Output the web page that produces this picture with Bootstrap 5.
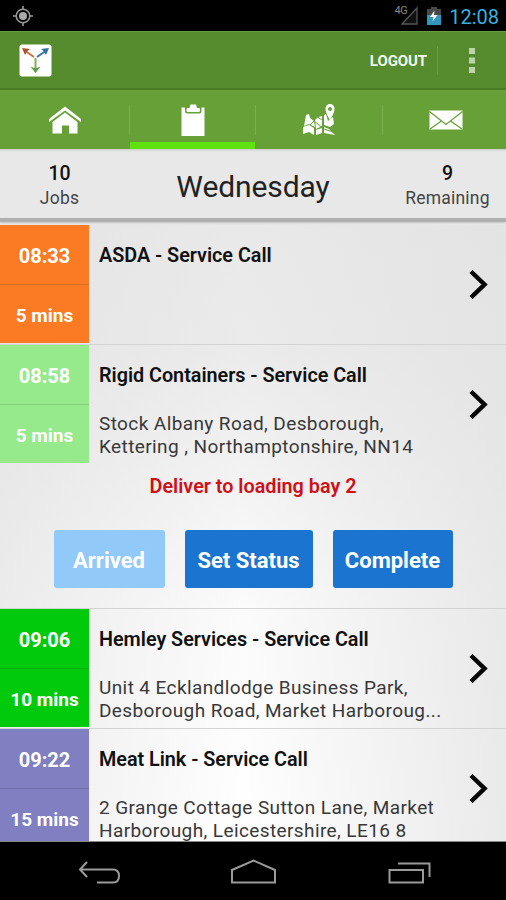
<!DOCTYPE html>
<html lang="en">
<head>
<meta charset="utf-8">
<meta name="viewport" content="width=device-width, initial-scale=1">
<title>Jobs - Wednesday</title>
<link href="https://cdn.jsdelivr.net/npm/bootstrap@5.3.0/dist/css/bootstrap.min.css" rel="stylesheet">
<style>
body{font-family:Roboto,"Liberation Sans",sans-serif;background:#000;width:506px;height:900px;overflow:hidden;color:#111}
svg{display:block;flex:none}
.status{height:31px;color:#38b0df;font-size:20px;line-height:33px;padding:0 7px 0 12px}
.clock{padding-top:3px}
.net{font-size:11px;line-height:10px;color:#888;margin-top:-10px;margin-right:-6px;letter-spacing:-.5px}
.appbar{height:59px;background:#568c2e;border-top:1px solid #6a9c3f;border-bottom:2px solid #497c25;padding-left:19px}
.logout{font-size:15px;font-weight:700;letter-spacing:-.1px;color:#f1f6ec;padding-right:10px;border-right:1px solid #6e9c4b;height:29px;line-height:31px}
.tabs{height:59px;background:#67a036}
.tab-item{position:relative;width:126.5px;height:59px;padding:13px 0 0 4px}
.tab-item+.tab-item{padding-left:6px}
.tab-item+.tab-item::before{content:"";position:absolute;left:2px;top:15px;height:30px;border-left:1px solid #7bb04f}
.tab-item.current::after{content:"";position:absolute;left:3px;right:-2px;bottom:0;height:7px;background:#60e211}
.dayhead{height:76px;background:#e8e8e8;padding-bottom:3px;position:relative}
.dayhead::before{content:"";position:absolute;left:0;right:0;top:0;height:3px;background:linear-gradient(#cfcfcf,#e8e8e8)}
.dayhead::after{content:"";position:absolute;left:0;right:0;bottom:3px;height:4px;background:#b0b0b0;box-shadow:0 1px 2px #c4c4c4}
.count{width:119px;line-height:25px;font-size:17.5px}
.count b{font-weight:500;font-size:19.5px}
.count span{color:#444;letter-spacing:.2px}
.count:last-child{padding-left:2px}
.day{font-size:30px;font-weight:400;letter-spacing:-.1px;padding-top:1px;color:#222}
.joblist{height:617px;overflow:hidden;background:linear-gradient(90deg,rgba(225,225,225,.6) 0,rgba(245,245,245,0) 48%,rgba(225,225,225,.7) 100%),linear-gradient(#e9e9e9 0,#ebebeb 20%,#fbfbfb 62%,#fff 100%);border-bottom:1px solid #888}
.job{height:118.5px}
.job+.job,.extra+.job{border-top:1px solid #d3d3d3;height:119.5px}
.slot{width:89px;height:118px;color:#fff;font-size:20px;font-weight:700;background:var(--slot);flex:none}
.slot div{height:59px;line-height:62px;text-align:center}
.slot div+div{border-top:1px solid rgba(0,0,0,.12);font-size:19px;line-height:61px}
.orange{--slot:#fa7b24}.pale{--slot:#96ea8b}.green{--slot:#00ca0b}.violet{--slot:#7f7fc2}
.info{width:360px;padding:19px 0 0 10px;flex:none}
.title{font-size:19.8px;font-weight:600;line-height:24px;height:48px;white-space:nowrap;letter-spacing:-.02px}
.addr{font-size:19px;line-height:23px;white-space:nowrap;color:#383838;letter-spacing:.4px}
.go{margin:44px 0 0 19.5px}
.extra{height:145px}
.note{color:#cf1016;font-size:19.8px;font-weight:600;line-height:24px;padding-top:12px}
.actions{gap:20px;padding:31px 0 0 0}
.actions .btn{height:58px;border:0;border-radius:3px;background:#1b75d0;font-size:22px;font-weight:700;padding:2px 0 0;opacity:1;color:#fff}
.w1{width:111px}.w2{width:128px}.w3{width:120px}
.actions .btn.off{background:#91c9f9}
.navbtns{height:58px;background:#000}
</style>
<script src="https://cdn.jsdelivr.net/npm/bootstrap@5.3.0/dist/js/bootstrap.bundle.min.js"></script>
</head>
<body>
<div class="status d-flex align-items-center">
<svg width="22" height="22" viewBox="0 0 22 22" fill="none" stroke="#999" stroke-width="1.6"><circle cx="11" cy="11" r="6.8"/><circle cx="11" cy="11" r="4" fill="#aaa" stroke="none"/><path d="M11 1v3.500M11 17.500V21M1 11h3.500M17.500 11H21"/></svg>
<span class="net ms-auto">4G</span>
<svg width="18" height="20" viewBox="0 0 18 20" fill="#111" stroke="#555" stroke-width="1.300"><path d="M16 2v16H1z"/></svg>
<svg class="ms-2" width="14" height="20" viewBox="0 0 14 20"><path d="M0 3h4V1h6v2h4v16H0z" fill="#484848"/><path d="M0 9h14v10H0z" fill="#3195bd"/><path d="M7.500 4.500L3 11h3.500l-1 4.500L10.500 9H7z" fill="#fff"/></svg>
<span class="clock ms-2">12:08</span>
</div>
<div class="appbar d-flex align-items-center">
<svg width="33" height="33" viewBox="0 0 33 33" fill="none" stroke-width="1.600"><rect x=".5" y=".5" width="32" height="32" rx="2.500" fill="#fff"/><path d="M15 13L7 7.500" stroke="#c8743c" stroke-width="2"/><path d="M3 4l8 1-3 2.500-2 3.500z" fill="#b0502c"/><path d="M18 13l8-5.500" stroke="#3476ad" stroke-width="2"/><path d="M30 4l-8 1 3 2.500 2 3.500z" fill="#2f6ea8"/><path d="M16.500 14v12" stroke="#7fae52" stroke-width="2"/><path d="M11.500 22.500l5 2 5-2-5 6.500z" fill="#5f9a45"/></svg>
<span class="logout ms-auto">LOGOUT</span>
<svg width="68" height="29" viewBox="0 0 68 29" fill="#bdd4ab"><path d="M31 2h6v6h-6zM31 11.500h6v6h-6zM31 21h6v6h-6z"/></svg>
</div>
<div class="tabs d-flex">
<div class="tab-item"><svg class="mx-auto" width="34" height="34" viewBox="0 0 34 34" fill="#fff"><path d="M1 16L17 3.500 33 16v3L17 7.500 1 19z"/><path d="M4.500 19L17 9.500 29.500 19v11.500H21v-8h-7v8H4.500z"/></svg></div>
<div class="tab-item current"><svg class="mx-auto" width="34" height="34" viewBox="0 0 34 34"><path d="M5.500 4.500h23V33h-23z" fill="#fff"/><path d="M9 4h16.500v4q0 2.500-2.500 2.500H11.500Q9 10.500 9 8z" fill="#67a036"/><path d="M10.500 8V6q0-1 1.500-1h1.500l1-3.500H20l1 3.500h1.500q1.500 0 1.500 1v2q0 1-1.500 1H12q-1.500 0-1.500-1z" fill="#fff"/></svg></div>
<div class="tab-item"><svg class="mx-auto" width="34" height="34" viewBox="0 0 34 34" fill="#fff"><path d="M4 12l3-1 1 4 4 3 1 6-6-3-5 2zM1 24l6-2 5 3v7l-5-3-6 2zM13 17l3-3 4-1 0 10-6 3zM14 27l6-2v5l-6 2zM22 12l2-1 2 7 5-4 1 7-4 3-6-2zM22 24l5 2 6 6-11-2z"/><path fill-rule="evenodd" d="M28 1a4.500 4.500 0 0 1 4.500 5c0 4-4.500 11-4.500 11s-4.500-7-4.500-11a4.500 4.500 0 0 1 4.500-5zm0 3a2 2 0 1 0 0 4 2 2 0 0 0 0-4z"/><path d="M12 14q2-2 5 1t4-1M8 22l4-4 10 8 9 3" fill="none" stroke="#67a036"/></svg></div>
<div class="tab-item"><svg class="mx-auto" width="34" height="34" viewBox="0 0 34 34"><path d="M.5 7.500h33v19H.5z" fill="#fff"/><path d="M.5 8.500l16.500 13 16.500-13M1 26l11.500-8M33 26l-11.500-8" fill="none" stroke="#67a036" stroke-width="1.300"/></svg></div>
</div>
<div class="dayhead d-flex justify-content-between align-items-center text-center">
<div class="count"><b class="d-block">10</b><span>Jobs</span></div>
<div class="day">Wednesday</div>
<div class="count"><b class="d-block">9</b><span>Remaining</span></div>
</div>
<main class="joblist">
<div class="job d-flex"><div class="slot orange"><div>08:33</div><div>5 mins</div></div><div class="info"><div class="title">ASDA - Service Call</div></div><svg class="go" width="20" height="30" viewBox="0 0 20 30" fill="none" stroke="#050505" stroke-width="4.500"><path d="M2 2.500L15.500 15.500 2 28.500"/></svg></div>
<div class="job d-flex"><div class="slot pale"><div>08:58</div><div>5 mins</div></div><div class="info"><div class="title">Rigid Containers - Service Call</div><div class="addr">Stock Albany Road, Desborough,<br>Kettering , Northamptonshire, NN14</div></div><svg class="go" width="20" height="30" viewBox="0 0 20 30" fill="none" stroke="#050505" stroke-width="4.500"><path d="M2 2.500L15.500 15.500 2 28.500"/></svg></div>
<div class="extra text-center"><div class="note">Deliver to loading bay 2</div><div class="actions d-flex justify-content-center"><button class="btn off w1" disabled>Arrived</button><button class="btn w2">Set Status</button><button class="btn w3">Complete</button></div></div>
<div class="job d-flex"><div class="slot green"><div>09:06</div><div>10 mins</div></div><div class="info"><div class="title">Hemley Services - Service Call</div><div class="addr">Unit 4 Ecklandlodge Business Park,<br>Desborough Road, Market Harboroug...</div></div><svg class="go" width="20" height="30" viewBox="0 0 20 30" fill="none" stroke="#050505" stroke-width="4.500"><path d="M2 2.500L15.500 15.500 2 28.500"/></svg></div>
<div class="job d-flex"><div class="slot violet"><div>09:22</div><div>15 mins</div></div><div class="info"><div class="title">Meat Link - Service Call</div><div class="addr">2 Grange Cottage Sutton Lane, Market<br>Harborough, Leicestershire, LE16 8</div></div><svg class="go" width="20" height="30" viewBox="0 0 20 30" fill="none" stroke="#050505" stroke-width="4.500"><path d="M2 2.500L15.500 15.500 2 28.500"/></svg></div>
</main>
<div class="navbtns d-flex justify-content-center">
<svg width="380" height="58" viewBox="63 842 380 58" fill="none" stroke="#9a9a9a" stroke-width="2"><path d="M87 862l-7 7.500 7 7.500M80 869.500h33q6 0 6 6.500t-6 6.500H97M232 882.500V870l21.500-9.500L275 870v12.500zM389.500 870h33.500v12.500h-33.500zM398 863.500h31.500v13.500"/></svg>
</div>
</body>
</html>
